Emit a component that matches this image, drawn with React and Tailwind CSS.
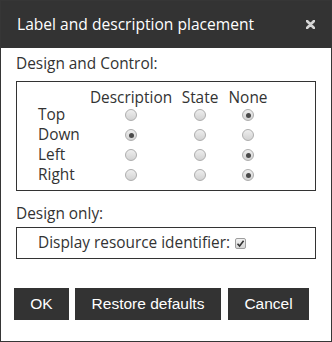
import React from 'react'

const rows = [
  { label: 'Top', value: 2 },
  { label: 'Down', value: 0 },
  { label: 'Left', value: 2 },
  { label: 'Right', value: 2 },
]

function Radio({ checked }) {
  return (
    <span className="flex h-3 w-3 items-center justify-center rounded-full border border-[#adadad] bg-gradient-to-b from-[#eeeeee] to-[#d2d2d2]">
      {checked && <span className="h-[5px] w-[5px] rounded-full bg-[#4a4a4a]" />}
    </span>
  )
}

export default function App() {
  return (
    <div className="flex h-[342px] w-[332px] flex-col border border-[#363636] bg-white font-['Open_Sans',sans-serif] text-[15.4px] text-[#333]">
      {/* Header */}
      <div className="flex h-[47px] items-center justify-between bg-[#333] pl-4 pr-[16px]">
        <span className="text-[15.6px] font-normal text-white">Label and description placement</span>
        <svg width="9" height="9" viewBox="0 0 9 9">
          <path d="M1 1L8 8M8 1L1 8" stroke="#d4d4d4" strokeWidth="2.6" strokeLinecap="round" />
        </svg>
      </div>

      <div className="px-[15px] pt-[6px]">
        <div className="leading-5">Design and Control:</div>
        <div className="mt-[7px] border border-[#333] pb-[5px] pl-[21px] pt-2">
          <div className="grid grid-cols-[48px_90px_48px_48px] leading-[15px]">
            <span />
            <span className="text-center">Description</span>
            <span className="text-center">State</span>
            <span className="text-center">None</span>
          </div>
          {rows.map(r => (
            <div key={r.label} className="grid h-5 grid-cols-[48px_90px_48px_48px] items-center leading-5">
              <span>{r.label}</span>
              {[0, 1, 2].map(i => (
                <span key={i} className="flex justify-center">
                  <Radio checked={r.value === i} />
                </span>
              ))}
            </div>
          ))}
        </div>

        <div className="mt-[13px] leading-5">Design only:</div>
        <div className="mt-[3px] flex items-center border border-[#333] py-[5px] pl-[21px] leading-5">
          <span>Display resource identifier:</span>
          <span className="ml-[5px] flex h-[11px] w-[11px] items-center justify-center rounded-[2px] border border-[#9d9d9d] bg-gradient-to-b from-[#f2f2f2] to-[#d6d6d6]">
            <svg width="9" height="9" viewBox="0 0 9 9">
              <path d="M1.5 4.8L3.6 7L7.6 1.8" fill="none" stroke="#333" strokeWidth="1.6" />
            </svg>
          </span>
        </div>

        <div className="-ml-[2px] mt-[29px] flex font-['Liberation_Sans',Arial,sans-serif] text-[15.5px] text-white">
          <button className="h-8 w-[55px] bg-[#333]">OK</button>
          <button className="ml-[6px] h-8 w-[146px] bg-[#333]">Restore defaults</button>
          <button className="ml-[7px] h-8 w-[81px] bg-[#333]">Cancel</button>
        </div>
      </div>
    </div>
  )
}
